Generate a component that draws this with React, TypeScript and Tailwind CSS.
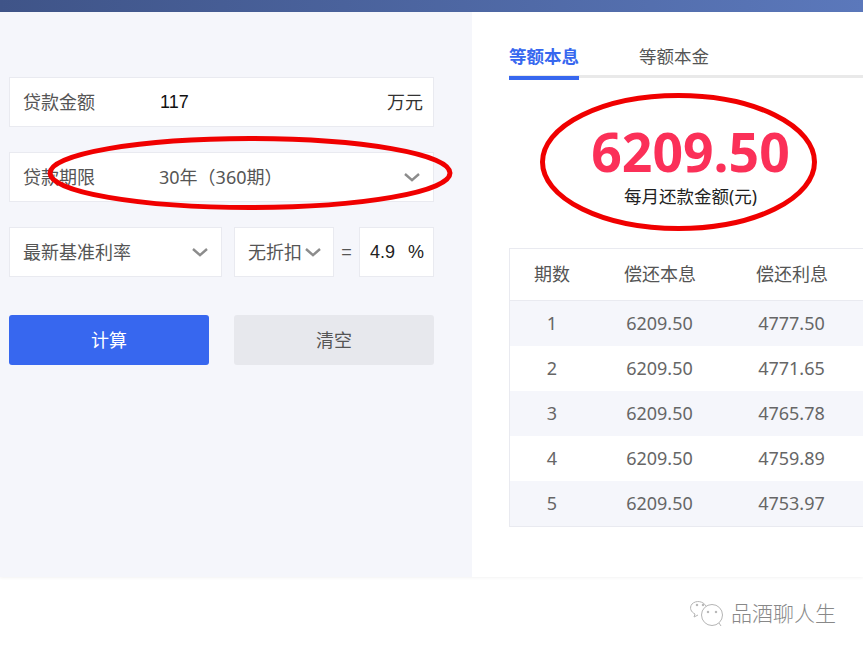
const font = { fontFamily: '"Noto Sans", "Noto Sans CJK SC", sans-serif' };
const inputFont = { fontFamily: '"Liberation Sans", "Noto Sans CJK SC", sans-serif' };

const rows = [
  ["1", "6209.50", "4777.50"],
  ["2", "6209.50", "4771.65"],
  ["3", "6209.50", "4765.78"],
  ["4", "6209.50", "4759.89"],
  ["5", "6209.50", "4753.97"],
];

function Chevron() {
  return (
    <svg className="shrink-0" width="16" height="9" viewBox="0 0 16 9" fill="none" stroke="#8c8c8c" strokeWidth="2.4">
      <path d="M1 1l7 6.200L15 1" />
    </svg>
  );
}

export default function App() {
  return (
    <div className="relative w-[863px] h-[651px] overflow-hidden bg-white" style={font}>
      {/* TOP BAR */}
      <div className="h-3 bg-gradient-to-r from-[#3f5488] to-[#5b78bb]" />

      <div className="flex h-[565px] shadow-[0_1px_3px_rgba(0,0,0,0.05)]">
        {/* LEFT */}
        <div className="w-[472px] shrink-0 bg-[#f5f6fb] pl-[9px] pt-[65px] text-[18px] text-[#555]">
          <div className="w-[425px] h-[50px] flex items-center bg-white border border-[#e9eaf0] pl-[13px] pr-[10px]">
            <span className="w-[137px]">贷款金额</span>
            <span className="flex-1 text-[#111]" style={inputFont}>117</span>
            <span className="text-[#333]">万元</span>
          </div>

          <div className="w-[425px] h-[50px] mt-[25px] flex items-center bg-white border border-[#e9eaf0] pl-[13px] pr-[13px]">
            <span className="w-[136px]">贷款期限</span>
            <span className="flex-1">30年（360期）</span>
            <Chevron />
          </div>

          <div className="mt-[25px] flex items-center w-[425px]">
            <div className="w-[213px] h-[50px] flex items-center justify-between bg-white border border-[#e9eaf0] pl-[13px] pr-[13px]">
              <span>最新基准利率</span>
              <Chevron />
            </div>
            <div className="w-[100px] h-[50px] ml-[12px] flex items-center gap-[3px] bg-white border border-[#e9eaf0] pl-[13px]">
              <span className="whitespace-nowrap">无折扣</span>
              <Chevron />
            </div>
            <span className="w-[25px] text-center" style={inputFont}>=</span>
            <div className="w-[75px] h-[50px] flex items-center justify-between bg-white border border-[#e9eaf0] pl-[10px] pr-[9px] text-[#222]" style={inputFont}>
              <span>4.9</span>
              <span>%</span>
            </div>
          </div>

          <div className="mt-[38px] flex w-[425px] justify-between">
            <button className="w-[200px] h-[50px] rounded-[3px] bg-[#3767ef] text-white">计算</button>
            <button className="w-[200px] h-[50px] rounded-[3px] bg-[#e7e8ed] text-[#555]">清空</button>
          </div>
        </div>

        {/* RIGHT */}
        <div className="flex-1 min-w-0 bg-white pl-[37px] pt-[28px]">
          <div className="flex border-b-[3px] border-[#e9e9e9] h-[38px] text-[17.500px] leading-[33px]">
            <span className="w-[70px] h-[40px] shrink-0 font-bold text-[#3767ef] border-b-[4px] border-[#3767ef] whitespace-nowrap">等额本息</span>
            <span className="ml-[60px] text-[#555] whitespace-nowrap">等额本金</span>
          </div>

          <div className="w-[363px] text-center">
            <div className="text-[53.500px] leading-[60px] mt-[44px] font-bold text-[#fb3058]">6209.50</div>
            <div className="text-[17.500px] leading-[24px] mt-[2px] text-[#222]">每月还款金额(元)</div>
          </div>

          <div className="mt-[40px] border border-r-0 border-[#e9eaf0] text-[18px] text-[#666]">
            <div className="flex h-[52px] items-center border-b border-[#e9eaf0] bg-white text-[#555]">
              <span className="w-[84px] text-center">期数</span>
              <span className="w-[132px] text-center">偿还本息</span>
              <span className="w-[132px] text-center">偿还利息</span>
            </div>
            {rows.map((row, i) => (
              <div key={row[0]} className={`flex h-[45px] items-center ${i % 2 === 0 ? "bg-[#f5f6fb]" : "bg-white"}`}>
                <span className="w-[84px] text-center">{row[0]}</span>
                <span className="w-[131px] text-center">{row[1]}</span>
                <span className="w-[133px] text-center">{row[2]}</span>
              </div>
            ))}
          </div>
        </div>
      </div>

      {/* WATERMARK */}
      <div className="flex justify-end items-center pr-[27px] pt-[21px] gap-[6px] text-[21px] leading-[30px] text-[#888]">
        <svg width="36" height="28" viewBox="0 0 36 28" fill="none" stroke="#b5b5b5" strokeWidth="1">
          <path d="M17 7C14 2 7 1 3 5c-3 4-1 8 3 10l-1 3 4-2" />
          <circle cx="23" cy="16" r="10.500" />
          <path d="M30 24l2 3" />
          <circle cx="19" cy="13" r="0.800" fill="#888" />
          <circle cx="27" cy="13" r="0.800" fill="#888" />
          <circle cx="8" cy="6" r="0.800" fill="#888" />
          <circle cx="14" cy="6" r="0.800" fill="#888" />
        </svg>
        <span className="font-light">品酒聊人生</span>
      </div>

      {/* RED MARKS */}
      <svg className="absolute left-[0px] top-[0px] pointer-events-none" width="863" height="651" fill="none" stroke="#f00000" strokeWidth="5">
        <ellipse cx="250" cy="173" rx="200" ry="34.500" />
        <ellipse cx="678.500" cy="162" rx="136" ry="66.500" />
      </svg>
    </div>
  );
}
